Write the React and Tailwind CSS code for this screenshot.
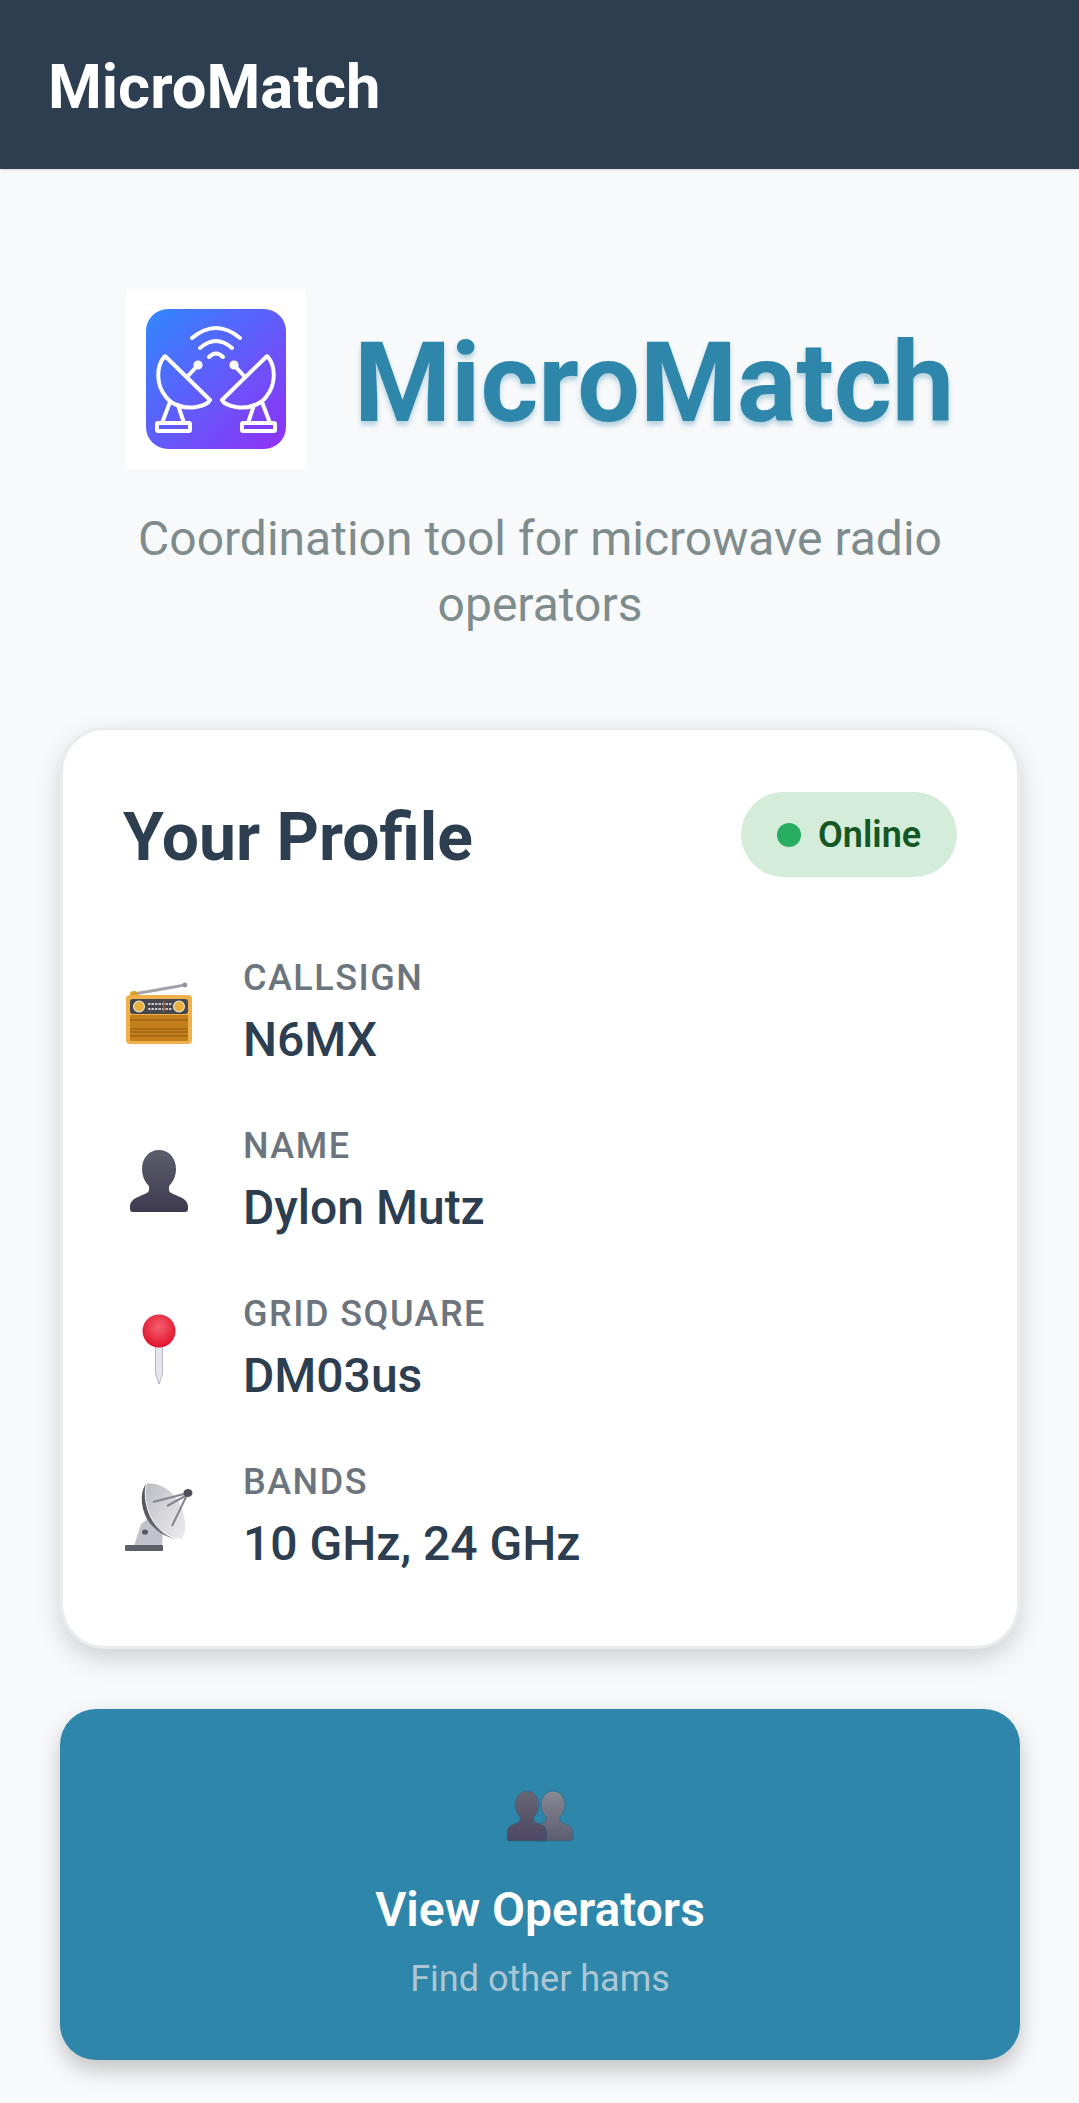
import React from "react";

function Logo() {
  return (
    <div className="w-[180px] h-[180px] bg-white flex items-center justify-center shrink-0">
      <svg width="140" height="140" viewBox="0 0 140 140" fill="none" stroke="#fff" strokeWidth="4" strokeLinecap="round" strokeLinejoin="round">
        <defs>
          <linearGradient id="logoGrad" x1="0" y1="0" x2="1" y2="1">
            <stop offset="0" stopColor="#3088ff" />
            <stop offset="1" stopColor="#9130f5" />
          </linearGradient>
          <g id="logoDish">
            <path d="M18 48C10 58 10 76 20 88c6 8 18 12 30 10 6-1 12-3 14-7L20 48c-1-1-1-1-2 0z" />
            <path d="M42 67l10-11" />
            <circle cx="52" cy="56" r="2.6" fill="#fff" />
            <path d="M24 93l-8 21M32 96l6 18" />
            <rect x="11" y="114" width="33" height="8" rx="1" />
          </g>
        </defs>
        <rect width="140" height="140" rx="22" fill="url(#logoGrad)" stroke="none" />
        <path d="M46 29Q70 9 94 29" />
        <path d="M54 39Q70 25 86 39" />
        <path d="M63 48Q70 41 77 48" />
        <use href="#logoDish" />
        <use href="#logoDish" transform="matrix(-1 0 0 1 140 0)" />
      </svg>
    </div>
  );
}

function RadioIcon() {
  return (
    <svg width="70" height="62" viewBox="0 0 70 62">
      <path d="M10 12L61 3" stroke="#a2a2ac" strokeWidth="3" />
      <circle cx="61" cy="3" r="2.4" fill="#93939c" />
      <ellipse cx="10" cy="12" rx="4" ry="3" fill="#d9a030" />
      <rect x="2" y="13" width="66" height="49" rx="4" fill="#eeb04a" />
      <rect x="6" y="17" width="58" height="15" rx="3" fill="#46474c" />
      <circle cx="15" cy="24.5" r="5.4" fill="#e8b03c" stroke="#e6e2d0" strokeWidth="1.2" />
      <circle cx="55" cy="24.5" r="5.4" fill="#e8b03c" stroke="#e6e2d0" strokeWidth="1.2" />
      <path d="M24 22h24M24 27h24" stroke="#eeeeee" strokeWidth="1.3" strokeDasharray="2.5 1" />
      <path d="M40 19v11" stroke="#b0503a" strokeWidth="1.4" />
      <rect x="6" y="33" width="58" height="26" rx="1" fill="#c47e1c" />
      <path d="M6 38h58M6 47h58M6 50h58M6 54h58" stroke="#8f5610" strokeWidth="1" />
    </svg>
  );
}

function PersonIcon() {
  return (
    <svg width="60" height="64" viewBox="0 0 60 64">
      <defs>
        <linearGradient id="personDark" x1="0" y1="0" x2="0" y2="1">
          <stop offset="0" stopColor="#5d5d6b" />
          <stop offset="1" stopColor="#3e3a50" />
        </linearGradient>
      </defs>
      <path
        d="M30 1c10 0 17 8 17 19 0 7-3 13-7 17v4c0 3 5 4 11 7 5 2 8 5 8 10v2c0 2-1 3-3 3H4c-2 0-3-1-3-3v-2c0-5 3-8 8-10 6-3 11-4 11-7v-4c-4-4-7-10-7-17C13 9 20 1 30 1z"
        fill="url(#personDark)"
      />
    </svg>
  );
}

function PeopleIcon() {
  const bust = "M21 1c7 0 12 6 12 14 0 5-2 9-5 12v3c0 2 4 3 8 5 3 1 5 4 5 8v5c0 2-1 3-3 3H3c-1 0-2-1-2-3v-5c0-4 2-7 5-8 4-2 8-3 8-5v-3c-3-3-5-7-5-12C9 7 14 1 21 1z";
  return (
    <svg width="68" height="52" viewBox="0 0 68 52">
      <defs>
        <linearGradient id="peopleBack" x1="0" y1="0" x2="0" y2="1">
          <stop offset="0" stopColor="#888a94" />
          <stop offset="1" stopColor="#5c5c72" />
        </linearGradient>
        <linearGradient id="peopleFront" x1="0" y1="0" x2="0" y2="1">
          <stop offset="0" stopColor="#666674" />
          <stop offset="1" stopColor="#4e4664" />
        </linearGradient>
      </defs>
      <path d={bust} transform="translate(26 0)" fill="url(#peopleBack)" stroke="#2a6c8c" strokeWidth="0.8" />
      <path d={bust} fill="url(#peopleFront)" stroke="#2a6c8c" strokeWidth="0.8" />
    </svg>
  );
}

function PinIcon() {
  return (
    <svg width="36" height="70" viewBox="0 0 36 70">
      <defs>
        <radialGradient id="pinBall" cx="0.5" cy="0.38" r="0.6">
          <stop offset="0" stopColor="#f4606e" />
          <stop offset="1" stopColor="#e2142f" />
        </radialGradient>
      </defs>
      <path d="M14.5 30h7v30l-3.5 10-3.5-10z" fill="#e4e5ef" stroke="#a8a9b8" strokeWidth="0.8" />
      <circle cx="18" cy="17" r="16.5" fill="url(#pinBall)" />
    </svg>
  );
}

function DishIcon() {
  return (
    <svg width="68" height="70" viewBox="0 0 68 70">
      <defs>
        <linearGradient id="dishFace" x1="0" y1="0" x2="1" y2="1">
          <stop offset="0" stopColor="#bcbcc4" />
          <stop offset="1" stopColor="#eeeef1" />
        </linearGradient>
        <linearGradient id="dishBack" x1="0" y1="0" x2="1" y2="0">
          <stop offset="0" stopColor="#55555e" />
          <stop offset="1" stopColor="#8c8c95" />
        </linearGradient>
      </defs>
      <path d="M9 64l7-22 8-6 14 12-1 16z" fill="#c2c2ca" />
      <ellipse cx="20" cy="50" rx="3" ry="2.6" fill="#55555e" />
      <rect x="0" y="63" width="38" height="6" rx="1" fill="#5f5f68" />
      <path d="M22 1C15 8 15 24 22 37c8 13 22 21 35 20z" fill="url(#dishBack)" />
      <path d="M22 1c12-1 25 6 33 20 6 12 8 29 2 36C43 57 30 46 24 31 20 20 19 8 22 1z" fill="url(#dishFace)" stroke="#fff" strokeWidth="1" />
      <path d="M28 20l35-9M47 44L62 13M42 24l20-11" stroke="#85858e" strokeWidth="2" fill="none" />
      <ellipse cx="63" cy="11" rx="4.5" ry="4" fill="#50505a" />
    </svg>
  );
}

function ProfileRow({ icon, label, value }) {
  return (
    <div className="flex items-center">
      <div className="w-[72px] mr-[48px] flex justify-center shrink-0">{icon}</div>
      <div>
        <div className="text-[36px] leading-[42px] font-medium tracking-[1.5px] text-[#6c757d]">{label}</div>
        <div className="text-[48px] leading-[56px] mt-[13px] font-medium text-[#2c3e50]">{value}</div>
      </div>
    </div>
  );
}

export default function App() {
  return (
    <div className="w-[1079px] h-[2103px] overflow-hidden bg-[#f8f9fa] font-['Roboto',sans-serif]">
      <header className="h-[169px] bg-[#2c3e50] flex items-center px-[48px] pt-[5px] shadow-sm">
        <h1 className="text-[61.5px] font-bold text-white">MicroMatch</h1>
      </header>

      <main className="pl-[60px] pr-[59px]">
        <div className="pt-[120px] flex items-center justify-center gap-[48px]">
          <Logo />
          <span className="pt-[8px] text-[111px] leading-[130px] font-bold text-[#2e86ab] [text-shadow:0_4px_5px_rgba(46,134,171,0.35)]">MicroMatch</span>
        </div>
        <p className="mt-[37px] text-center text-[48px] leading-[66px] text-[#7f8c8d] px-[20px]">
          Coordination tool for microwave radio operators
        </p>

        <section className="mt-[89px] h-[922px] bg-white rounded-[45px] border-[3px] border-[#e9ecef] shadow-[0_10px_26px_rgba(0,0,0,0.16)] px-[60px] pt-[62px]">
          <div className="flex items-center justify-between">
            <h2 className="h-[85px] text-[66px] leading-[91px] font-bold text-[#2c3e50]">Your Profile</h2>
            <div className="h-[85px] w-[216px] rounded-full bg-[#d4edda] flex items-center pl-[36px] gap-[17px]">
              <span className="w-[24px] h-[24px] rounded-full bg-[#27ae60]" />
              <span className="text-[36px] font-semibold text-[#155724]">Online</span>
            </div>
          </div>
          <div className="mt-[80px] flex flex-col gap-[57px]">
            <ProfileRow icon={<RadioIcon />} label="CALLSIGN" value="N6MX" />
            <ProfileRow icon={<PersonIcon />} label="NAME" value="Dylon Mutz" />
            <ProfileRow icon={<PinIcon />} label="GRID SQUARE" value="DM03us" />
            <ProfileRow icon={<DishIcon />} label="BANDS" value="10 GHz, 24 GHz" />
          </div>
        </section>

        <button className="mt-[60px] w-full h-[351px] rounded-[36px] bg-[#2e86ab] shadow-[0_10px_22px_rgba(0,0,0,0.22)] flex flex-col items-center pt-[81px]">
          <PeopleIcon />
          <span className="mt-[40px] text-[48px] leading-[56px] font-semibold text-white">View Operators</span>
          <span className="mt-[20px] text-[36px] leading-[42px] text-[#adc6d3]">Find other hams</span>
        </button>
      </main>
    </div>
  );
}
